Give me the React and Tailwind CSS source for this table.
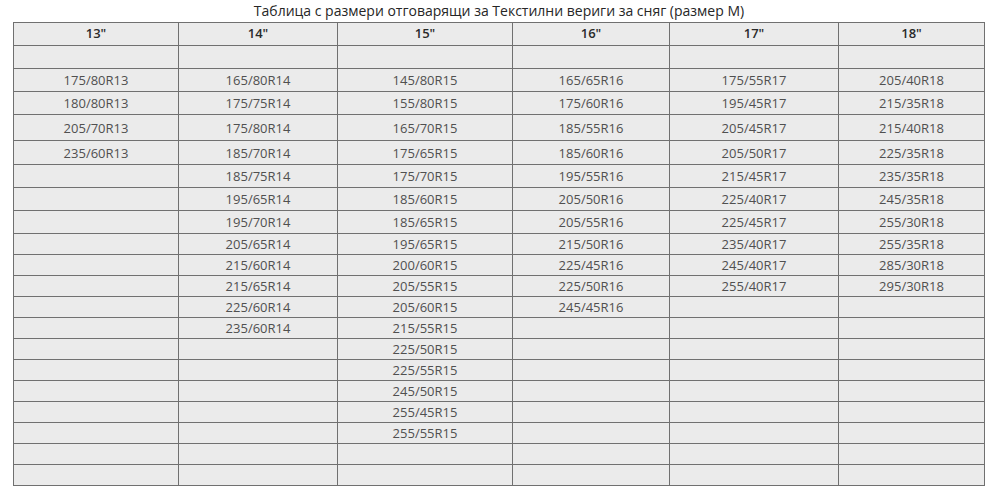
import React from 'react';

const heads = ['13"', '14"', '15"', '16"', '17"', '18"'];
const widths = ['w-[165px]', 'w-[159px]', 'w-[175px]', 'w-[157px]', 'w-[169px]', 'w-[146px]'];

const rows = [
  { h: 'h-[23px]', c: ['', '', '', '', '', ''] },
  { h: 'h-[23px]', c: ['175/80R13', '165/80R14', '145/80R15', '165/65R16', '175/55R17', '205/40R18'] },
  { h: 'h-[23px]', c: ['180/80R13', '175/75R14', '155/80R15', '175/60R16', '195/45R17', '215/35R18'] },
  { h: 'h-[26px]', c: ['205/70R13', '175/80R14', '165/70R15', '185/55R16', '205/45R17', '215/40R18'] },
  { h: 'h-[24px]', c: ['235/60R13', '185/70R14', '175/65R15', '185/60R16', '205/50R17', '225/35R18'] },
  { h: 'h-[23px]', c: ['', '185/75R14', '175/70R15', '195/55R16', '215/45R17', '235/35R18'] },
  { h: 'h-[23px]', c: ['', '195/65R14', '185/60R15', '205/50R16', '225/40R17', '245/35R18'] },
  { h: 'h-[23px]', c: ['', '195/70R14', '185/65R15', '205/55R16', '225/45R17', '255/30R18'] },
  { h: 'h-[21px]', c: ['', '205/65R14', '195/65R15', '215/50R16', '235/40R17', '255/35R18'] },
  { h: 'h-[21px]', c: ['', '215/60R14', '200/60R15', '225/45R16', '245/40R17', '285/30R18'] },
  { h: 'h-[21px]', c: ['', '215/65R14', '205/55R15', '225/50R16', '255/40R17', '295/30R18'] },
  { h: 'h-[21px]', c: ['', '225/60R14', '205/60R15', '245/45R16', '', ''] },
  { h: 'h-[21px]', c: ['', '235/60R14', '215/55R15', '', '', ''] },
  { h: 'h-[21px]', c: ['', '', '225/50R15', '', '', ''] },
  { h: 'h-[21px]', c: ['', '', '225/55R15', '', '', ''] },
  { h: 'h-[21px]', c: ['', '', '245/50R15', '', '', ''] },
  { h: 'h-[21px]', c: ['', '', '255/45R15', '', '', ''] },
  { h: 'h-[21px]', c: ['', '', '255/55R15', '', '', ''] },
  { h: 'h-[21px]', c: ['', '', '', '', '', ''] },
  { h: 'h-[21px]', c: ['', '', '', '', '', ''] },
];

export default function App() {
  return (
    <div className="bg-white w-[1000px] h-[497px] overflow-hidden pl-[13px] font-['Open_Sans',_'Liberation_Sans',_sans-serif]">
      <table className="w-[972px] table-fixed border-collapse text-center">
        <caption className="h-[22px] text-[14px] leading-[22px] text-[#262626]">
          Таблица с размери отговарящи за Текстилни вериги за сняг (размер M)
        </caption>
        <colgroup>
          {widths.map((w, i) => (
            <col key={i} className={w} />
          ))}
        </colgroup>
        <thead>
          <tr className="h-[23px]">
            {heads.map((t) => (
              <th key={t} className="border border-[#707070] bg-[#ebebeb] p-0 text-[13px] font-semibold text-[#2a2a2a]">
                {t}
              </th>
            ))}
          </tr>
        </thead>
        <tbody>
          {rows.map((r, i) => (
            <tr key={i} className={r.h}>
              {r.c.map((t, j) => (
                <td key={j} className="border border-[#707070] bg-[#ebebeb] p-0 text-[13px] leading-[18px] text-[#505050]">
                  {t}
                </td>
              ))}
            </tr>
          ))}
        </tbody>
      </table>
    </div>
  );
}
